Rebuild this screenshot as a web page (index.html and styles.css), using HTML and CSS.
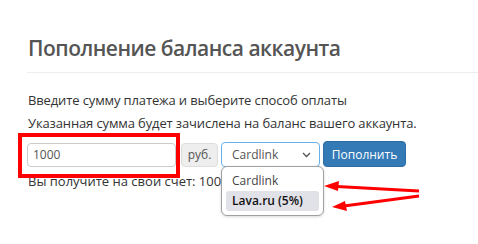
FILE: index.html
```html
<!DOCTYPE html>
<html lang="ru">
<head>
<meta charset="utf-8">
<link rel="stylesheet" href="styles.css">
</head>
<body>
<div class="page">
  <h2 class="page-header">Пополнение баланса аккаунта</h2>
  <p class="line">Введите сумму платежа и выберите способ оплаты</p>
  <p class="line">Указанная сумма будет зачислена на баланс вашего аккаунта.</p>
  <div class="form-row">
    <div class="amount">
      <div class="input">1000</div>
      <div class="highlight-box"></div>
    </div>
    <div class="addon">руб.</div>
    <div class="select-wrap">
      <div class="select">
        <span>Cardlink</span>
        <svg class="chev" width="9" height="6" viewBox="0 0 9 6"><path d="M1 1l3.5 3.5L8 1" fill="none" stroke="#555" stroke-width="1.3"/></svg>
      </div>
      <div class="dropdown">
        <div class="opt">Cardlink</div>
        <div class="opt active">Lava.ru (5%)</div>
      </div>
      <svg class="arrows" width="100" height="40" viewBox="0 0 100 40">
        <path d="M98 17 L16 12.5" stroke="#f00" stroke-width="3" fill="none"/>
        <polygon points="3,12 18,7 17,17" fill="#f00"/>
        <path d="M98 22 L23 32" stroke="#f00" stroke-width="3" fill="none"/>
        <polygon points="11,33 24,27 26,37" fill="#f00"/>
      </svg>
    </div>
    <button class="btn">Пополнить</button>
  </div>
  <p class="result">Вы получите на свой счет: 1000 руб.</p>
</div>
</body>
</html>
```
FILE: styles.css
```css
html, body {
  margin: 0;
  padding: 0;
  background: #fff;
}
body {
  min-height: 244px;
  font-family: "Open Sans", "Noto Sans", sans-serif;
  font-size: 13px;
  color: #333;
}
.page {
  box-sizing: border-box;
  min-height: 244px;
  padding: 36px 0 0 27px;
}
.page-header {
  margin: 0;
  padding: 0 0 12px 1px;
  font-size: 21px;
  letter-spacing: -0.5px;
  line-height: 24px;
  font-weight: 600;
  color: #555;
  border-bottom: 1px solid #eee;
}
.line {
  margin: 0;
  padding-left: 1px;
  line-height: 23px;
  letter-spacing: -0.13px;
}
.page-header + .line {
  margin-top: 16px;
}
.form-row {
  margin-top: 6px;
  display: flex;
  align-items: flex-end;
  height: 26px;
}
.amount {
  position: relative;
}
.input {
  box-sizing: border-box;
  width: 149px;
  height: 24px;
  border: 1px solid #ccc;
  border-radius: 4px;
  padding: 0 0 0 5px;
  line-height: 22px;
  font-size: 12px;
  color: #555;
}
.highlight-box {
  position: absolute;
  left: -9px;
  top: -10px;
  width: 154px;
  height: 37px;
  border: 4px solid #f00;
}
.addon {
  box-sizing: border-box;
  margin-left: 5px;
  width: 37px;
  height: 24px;
  background: #eee;
  border: 1px solid #ddd;
  border-radius: 4px;
  text-align: center;
  line-height: 22px;
  font-size: 12px;
  color: #555;
}
.select-wrap {
  position: relative;
  margin-left: 3px;
}
.select {
  box-sizing: border-box;
  width: 99px;
  height: 25px;
  border: 1px solid #66afe9;
  border-radius: 4px;
  padding: 0 8px 0 10px;
  display: flex;
  align-items: center;
  justify-content: space-between;
  font-size: 12px;
  color: #555;
}
.chev {
  display: block;
}
.dropdown {
  position: absolute;
  left: 0;
  top: 24px;
  z-index: 2;
  box-sizing: border-box;
  width: 103px;
  height: 50px;
  background: #fff;
  border: 1px solid #a0a0a0;
  border-radius: 6px;
  padding: 4px 4px;
  box-shadow: 0 1px 3px rgba(0,0,0,0.15);
  font-size: 12px;
}
.opt {
  height: 20px;
  line-height: 20px;
  padding-left: 6px;
  color: #444;
  border-radius: 3px;
}
.opt.active {
  background: #e1e1e8;
  color: #111;
  font-weight: 600;
}
.arrows {
  position: absolute;
  left: 100px;
  top: 32px;
  z-index: 2;
}
.btn {
  margin-left: 3px;
  box-sizing: border-box;
  width: 83px;
  height: 26px;
  background: #337ab7;
  border: 1px solid #2e6da4;
  border-radius: 4px;
  color: #fff;
  font-family: "Open Sans", "Noto Sans", sans-serif;
  font-size: 12px;
  padding: 0;
}
.result {
  margin: 4px 0 0 0;
  padding-left: 1px;
  line-height: 20px;
}
```
